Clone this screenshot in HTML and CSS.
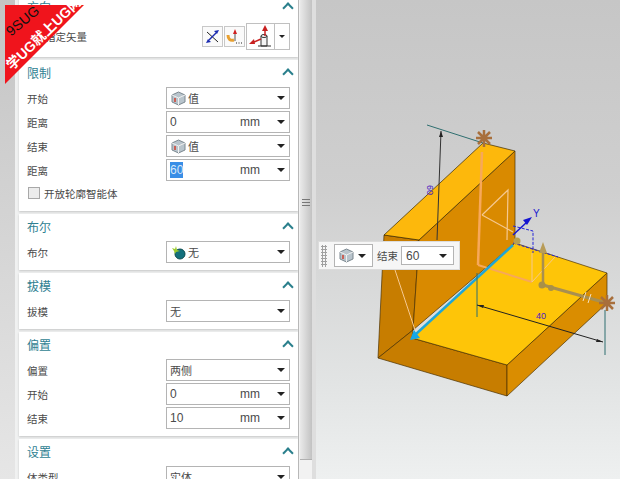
FILE: index.html
```html
<!DOCTYPE html>
<html lang="zh-CN">
<head>
    <meta charset="UTF-8">
    <title>拉伸</title>
    <link rel="stylesheet" href="styles.css">
</head>
<body>
    <div class="watermark">
        <span class="wm-top">9SUG</span>
        <span class="wm-bottom">学UG就上UG网</span>
    </div>

    <div class="gutter"></div>

    <div class="panel">
        <section class="card card-first">
            <div class="card-head"><h2>方向</h2><span class="chev"></span></div>
            <div class="vector-row">
                <span class="vector-label">指定矢量</span>
                <span class="tool-btn">
                    <svg width="17" height="17" viewBox="0 0 17 17"><path d="M3 4L14 14" stroke="#222" fill="none"/><path d="M5 12L12 5" stroke="#1a2bb0" stroke-width="1.500" fill="none"/><path d="M15 2l-5 1 3 3zM2 15l5-1-3-3z" fill="#1a2bb0"/></svg>
                </span>
                <span class="tool-btn">
                    <svg width="17" height="17" viewBox="0 0 17 17"><path d="M2 7c0 4 2 6 6 5" stroke="#e8a030" stroke-width="3" fill="none"/><path d="M9 13V5" stroke="#555" fill="none"/><path d="M9 1l2 5H7z" fill="#d02020"/><path d="M10 15h1M12.500 15h1M15 15h1" stroke="#222"/></svg>
                </span>
                <span class="tool-split">
                    <span class="tool-main">
                        <svg width="25" height="25" viewBox="0 0 25 25"><path d="M13 12h6v10h-6z" fill="#f4f4f4" stroke="#333"/><ellipse cx="16" cy="12" rx="3" ry="1.500" fill="#f4f4f4" stroke="#333"/><path d="M10 22h13" stroke="#333" fill="none"/><path d="M13 15L6 18" stroke="#c82020" stroke-width="1.500" fill="none"/><path d="M1 20l5-5 1 5z" fill="#c82020"/><path d="M17 12V6" stroke="#c82020" stroke-width="1.500" fill="none"/><path d="M17 1l3 6h-6z" fill="#c82020"/></svg>
                    </span>
                    <span class="tool-arrow"><i class="caret"></i></span>
                </span>
            </div>
        </section>

        <section class="card card-limits">
            <div class="card-head"><h2>限制</h2><span class="chev"></span></div>
            <div class="rows">
                <div class="row"><label>开始</label><div class="combo"><svg class="cube" width="15" height="15" viewBox="0 0 15 15"><path d="M7.500 1L14 4v7l-6.500 3L1 11V4z" fill="#b8c4cc" stroke="#7c8890"/><path d="M1 4l6.500 3L14 4M7.500 7v7" stroke="#f0f0f0" fill="none"/><path d="M4 7v4" stroke="#d04030" stroke-width="1.500"/></svg><span class="value">值</span><i class="caret"></i></div></div>
                <div class="row"><label>距离</label><div class="combo"><span class="value num">0</span><span class="unit">mm</span><i class="caret"></i></div></div>
                <div class="row"><label>结束</label><div class="combo"><svg class="cube" width="15" height="15" viewBox="0 0 15 15"><path d="M7.500 1L14 4v7l-6.500 3L1 11V4z" fill="#b8c4cc" stroke="#7c8890"/><path d="M1 4l6.500 3L14 4M7.500 7v7" stroke="#f0f0f0" fill="none"/><path d="M4 7v4" stroke="#d04030" stroke-width="1.500"/></svg><span class="value">值</span><i class="caret"></i></div></div>
                <div class="row"><label>距离</label><div class="combo"><span class="value num"><span class="selected">60</span></span><span class="unit">mm</span><i class="caret"></i></div></div>
            </div>
            <div class="check-row"><span class="checkbox"></span>开放轮廓智能体</div>
        </section>

        <section class="card">
            <div class="card-head"><h2>布尔</h2><span class="chev"></span></div>
            <div class="rows">
                <div class="row"><label>布尔</label><div class="combo"><svg class="cube" width="15" height="15" viewBox="0 0 15 15"><circle cx="9" cy="9" r="5" fill="#14707c" stroke="#0c4c50"/><path d="M1 3l3 1 1-3 1 4 3 1-4 1-1 2-1-3z" fill="#9ccc30"/></svg><span class="value">无</span><i class="caret"></i></div></div>
            </div>
        </section>

        <section class="card">
            <div class="card-head"><h2>拔模</h2><span class="chev"></span></div>
            <div class="rows">
                <div class="row"><label>拔模</label><div class="combo"><span class="value">无</span><i class="caret"></i></div></div>
            </div>
        </section>

        <section class="card">
            <div class="card-head"><h2>偏置</h2><span class="chev"></span></div>
            <div class="rows">
                <div class="row"><label>偏置</label><div class="combo"><span class="value">两侧</span><i class="caret"></i></div></div>
                <div class="row"><label>开始</label><div class="combo"><span class="value num">0</span><span class="unit">mm</span><i class="caret"></i></div></div>
                <div class="row"><label>结束</label><div class="combo"><span class="value num">10</span><span class="unit">mm</span><i class="caret"></i></div></div>
            </div>
        </section>

        <section class="card">
            <div class="card-head"><h2>设置</h2><span class="chev"></span></div>
            <div class="rows">
                <div class="row"><label>体类型</label><div class="combo"><span class="value">实体</span><i class="caret"></i></div></div>
            </div>
        </section>
    </div>

    <div class="sash">
        <div class="thumb"><span class="grip"></span></div>
    </div>

    <div class="viewport">
        <svg class="model" width="308" height="479" viewBox="312 0 308 479">
            <!-- wall -->
            <polygon points="384,235 419,240 413,330 378,358" fill="#c77d00" stroke="#4a3000" stroke-width="0.700"/>
            <polygon points="515,151 419,240 413,330 515,243" fill="#d98a00" stroke="#4a3000" stroke-width="0.700"/>
            <polygon points="483,143 515,151 419,240 384,235" fill="#fdb80c" stroke="#3a2800" stroke-width="0.700"/>

            <!-- height dimension -->
            <path d="M427 125L483 143" stroke="#2f6f70" fill="none"/>
            <path d="M441 131L437 240" stroke="#333" fill="none"/>
            <path d="M441 131l-2 6h4z" fill="#222"/>
            <text x="426" y="192" class="dim" transform="rotate(90 430 189)">60</text>

            <!-- base -->
            <polygon points="413,330 412,338 507,365 507,396 378,358" fill="#c77d00" stroke="#4a3000" stroke-width="0.700"/>
            <polygon points="507,365 607,273 607,303 507,396" fill="#da8d00" stroke="#4a3000" stroke-width="0.700"/>
            <polygon points="515,243 607,273 507,365 412,338" fill="#fec508" stroke="#4a3000" stroke-width="0.700"/>

            <!-- preview sketch -->
            <path d="M482 152L478 265" stroke="#f7a85a" stroke-width="2.500" fill="none"/>
            <path d="M482 215L508 190L507 240M482 215L513 232" stroke="#f5c890" stroke-width="1.200" fill="none"/>
            <path d="M478 265L532 282" stroke="#f7a85a" stroke-width="2" fill="none"/>
            <path d="M532 282V253M532 282L555 257M415 330L395 270" stroke="#f5c890" fill="none"/>

            <!-- datum axes -->
            <path d="M513 235L527 222" stroke="#1414d0" stroke-width="1.500" fill="none"/>
            <path d="M532 217l-9 3 4 5z" fill="#1414d0"/>
            <text x="533" y="217" class="axis">Y</text>
            <path d="M513 226L533 231V253M513 243L558 257" stroke="#2424d8" stroke-dasharray="3 1.500" fill="none"/>
            <circle cx="517" cy="241" r="3.500" fill="#b8a050"/>
            <path d="M543 283V250" stroke="#a88f50" stroke-width="2.500" fill="none"/>
            <path d="M543 242l-4 11h8z" fill="#b89c58"/>
            <path d="M543 285L603 302" stroke="#a88f50" stroke-width="3" fill="none"/>
            <circle cx="542" cy="285" r="3.500" fill="#a89048"/>
            <circle cx="551" cy="288" r="3" fill="#a89048"/>
            <path d="M586 292l-3 9M591 294l-3 9" stroke="#f2dfc0" fill="none"/>

            <!-- selected edge -->
            <path d="M513 245L416 334" stroke="#1fa6d6" stroke-width="2.500" fill="none"/>
            <path d="M410 340l10-2-6-8z" fill="#16a8e8"/>

            <!-- bottom dimension -->
            <path d="M477 273V317M605 310V355" stroke="#2f6f70" fill="none"/>
            <path d="M477 305L603 342" stroke="#222" fill="none"/>
            <path d="M477 305l7 0-1 3zM603 342l-7 0 1-3z" fill="#222"/>
            <text x="536" y="319" class="dim">40</text>

            <!-- handles -->
            <g stroke="#a86f3c" stroke-width="2.500">
                <path d="M484 130v17M476 138h16M478 132l12 12M490 132l-12 12"/>
                <path d="M607 295v16M599 303h16M601 297l12 12M613 297l-12 12"/>
            </g>
        </svg>

        <div class="float-bar">
            <span class="dots"></span>
            <div class="mini-combo mini-first"><svg width="15" height="15" viewBox="0 0 15 15"><path d="M7.500 1L14 4v7l-6.500 3L1 11V4z" fill="#b8c4cc" stroke="#7c8890"/><path d="M1 4l6.500 3L14 4M7.500 7v7" stroke="#f0f0f0" fill="none"/><path d="M4 7v4" stroke="#d04030" stroke-width="1.500"/></svg><i class="caret"></i></div>
            <span class="mini-label">结束</span>
            <div class="mini-combo mini-value"><span class="num">60</span><i class="caret"></i></div>
        </div>
    </div>
</body>
</html>
```

FILE: styles.css
```css
html, body {
    margin: 0;
    height: 100%;
    overflow: hidden;
}

body {
    display: flex;
    position: relative;
    width: 620px;
    height: 479px;
    font-family: "Noto Sans CJK SC", "Liberation Sans", sans-serif;
    font-size: 10.5px;
    color: #4a4a4a;
}

.gutter {
    width: 15px;
    background: linear-gradient(#c4c4c4, #e6e6e6);
}

.panel {
    width: 283px;
    height: 479px;
    padding: 0 0 0 4px;
    box-sizing: border-box;
    background: #f0f1f1;
    overflow: hidden;
}

.card {
    background: #fff;
    margin-bottom: 3px;
    padding: 0 8px;
    box-shadow: 0 1px 2px rgba(0, 0, 0, 0.18);
}

.card-first {
    margin-top: -6px;
}

.card-head {
    display: flex;
    justify-content: space-between;
    align-items: center;
    height: 24px;
    padding-bottom: 3px;
}

.card-head h2 {
    margin: 0;
    font-size: 12px;
    font-weight: 400;
    color: #2f7f92;
}

.chev {
    width: 6px;
    height: 6px;
    margin: 4px -2px 0 0;
    border-top: 2px solid #2a7f8c;
    border-left: 2px solid #2a7f8c;
    transform: rotate(45deg);
}

.vector-row {
    display: flex;
    align-items: center;
    height: 30px;
    padding-bottom: 6px;
}

.vector-label {
    margin-left: 18px;
    margin-right: auto;
}

.tool-btn {
    display: flex;
    align-items: center;
    justify-content: center;
    width: 19px;
    height: 19px;
    margin-right: 1px;
    border: 1px solid #c8c8c8;
    background: #fafafa;
}

.tool-split {
    display: flex;
    height: 27px;
    border: 1px solid #c0c0c0;
    box-sizing: border-box;
    width: 44px;
}

.tool-main {
    display: flex;
    align-items: center;
    justify-content: center;
    width: 27px;
    border-right: 1px solid #c0c0c0;
}

.tool-arrow {
    display: flex;
    flex: 1;
    align-items: center;
    justify-content: center;
}

.rows {
    display: flex;
    flex-direction: column;
    gap: 2px;
    padding-bottom: 7px;
}

.card-limits .rows {
    padding-bottom: 0;
}

.row {
    display: flex;
    align-items: center;
    justify-content: space-between;
    height: 22px;
}

.combo {
    display: flex;
    align-items: center;
    width: 124px;
    height: 22px;
    box-sizing: border-box;
    padding: 0 4px 0 3px;
    border: 1px solid #b4b4b4;
    background: #fff;
}

.cube {
    margin: 0 2px 0 1px;
}

.value {
    flex: 1;
    font-size: 11px;
    line-height: 16px;
}

.num {
    font-family: "Liberation Sans", sans-serif;
    font-size: 12px;
}

.selected {
    display: inline-block;
    background: #3a8ee6;
    color: #d8e8f8;
}

.unit {
    margin-right: 17px;
    font-family: "Liberation Sans", sans-serif;
    font-size: 12px;
}

.caret {
    width: 0;
    height: 0;
    border-left: 4px solid transparent;
    border-right: 4px solid transparent;
    border-top: 4px solid #222;
}

.tool-arrow .caret {
    border-left-width: 3px;
    border-right-width: 3px;
    border-top-width: 3px;
}

.check-row {
    display: flex;
    align-items: center;
    gap: 4px;
    height: 16px;
    margin-top: 4px;
    padding: 0 0 10px 1px;
}

.checkbox {
    width: 10px;
    height: 10px;
    border: 1px solid #a8a8a8;
    background: #ececec;
}

.sash {
    width: 14px;
    height: 479px;
    padding-left: 1px;
    background: #f2f2f2;
    border-left: 1px solid #b8b8b8;
    box-sizing: border-box;
}

.thumb {
    display: flex;
    justify-content: center;
    width: 12px;
    height: 460px;
    background: linear-gradient(90deg, #eaeaea, #c2c2c2);
    border-bottom: 1px solid #b0b0b0;
    box-sizing: border-box;
}

.grip {
    width: 8px;
    height: 7px;
    margin-top: 199px;
    background: repeating-linear-gradient(#777 0, #777 1px, transparent 1px, transparent 3px);
}

.viewport {
    position: relative;
    flex: 1;
    background: linear-gradient(#c6c6c6, #cfcfcf 40%, #e2e4e4 80%, #eef0f0);
    box-shadow: inset 4px 0 0 #dedede;
}

.model {
    display: block;
}

.dim {
    font-family: "Liberation Sans", sans-serif;
    font-size: 9px;
    fill: #4a20c0;
}

.axis {
    font-family: "Liberation Sans", sans-serif;
    font-size: 10px;
    fill: #1818d0;
}

.float-bar {
    position: absolute;
    left: 6px;
    top: 241px;
    display: flex;
    align-items: center;
    width: 142px;
    height: 29px;
    box-sizing: border-box;
    background: #f6f6f6;
    border: 1px solid #dcdcdc;
}

.dots {
    width: 6px;
    height: 22px;
    margin: 0 7px 0 2px;
    background: radial-gradient(circle, #a0a0a0 1px, transparent 1.2px) 0 0 / 3px 3px;
}

.mini-combo {
    display: flex;
    align-items: center;
    justify-content: space-between;
    box-sizing: border-box;
    background: #fff;
    border: 1px solid #b4b4b4;
    padding: 0 6px 0 4px;
}

.mini-first {
    width: 39px;
    height: 23px;
}

.mini-label {
    margin: 0 3px 0 4px;
}

.mini-value {
    width: 53px;
    height: 19px;
}

.watermark {
    position: absolute;
    left: 5px;
    top: 5px;
    z-index: 5;
    width: 79px;
    height: 79px;
    background: #f0141c;
    clip-path: polygon(0 0, 100% 0, 0 100%);
}

.wm-top, .wm-bottom {
    position: absolute;
    white-space: nowrap;
    font-family: "Liberation Sans", "Noto Sans CJK SC", sans-serif;
    line-height: 15px;
    transform-origin: left bottom;
}

.wm-top {
    left: 8px;
    top: 19px;
    font-size: 14px;
    color: #111;
    transform: rotate(-40deg);
}

.wm-bottom {
    left: 9px;
    top: 53px;
    font-size: 14px;
    font-weight: 700;
    color: #fff;
    transform: rotate(-44deg);
}
```
